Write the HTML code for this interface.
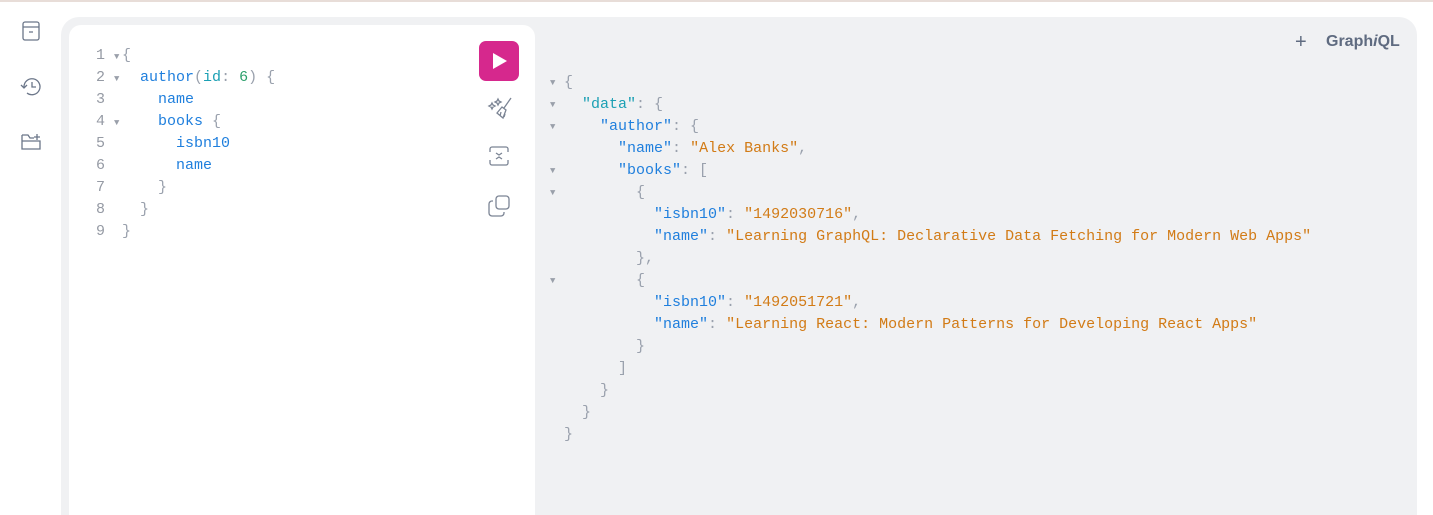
<!DOCTYPE html>
<html><head><meta charset="utf-8"><style>
*{margin:0;padding:0;box-sizing:border-box}
html,body{width:1433px;height:515px;overflow:hidden}
body{background:#fff;position:relative;font-family:"Liberation Mono",monospace;font-size:15px}
.topline{position:absolute;left:0;top:0;width:1433px;height:2px;background:#e8ddd8}
.main{position:absolute;left:61px;top:17px;width:1356px;height:498px;background:#f0f1f3;border-radius:18px 18px 0 0}
.ed{position:absolute;left:69px;top:25px;width:466px;height:490px;background:#fff;border-radius:12px 12px 0 0}
.ln{position:absolute;height:22px;line-height:22px;white-space:pre}
.g{color:#9aa1ad}.b{color:#1f7fdd}.t{color:#1ba0b4}.n{color:#2b9f6b}.o{color:#d27b16}
.num{color:#959aa4}
.arr{color:#9aa0aa;font-size:9px}
svg{position:absolute}
.run{position:absolute;left:479px;top:41px;width:40px;height:40px;background:#d6288d;border-radius:7px}
.gi{position:absolute;left:1326px;top:33px;font-family:"Liberation Sans",sans-serif;font-weight:bold;font-size:16px;color:#5f6b80}
</style></head><body>
<div class="topline"></div>
<svg style="left:22px;top:21px" width="18" height="20" viewBox="0 0 18 20" fill="none" stroke="#6b7689" stroke-width="1.3"><rect x="1" y="1" width="16" height="18" rx="2"/><path d="M1 6H17M7 11H11"/></svg>
<svg style="left:20px;top:77px" width="22" height="20" viewBox="0 0 22 20" fill="none" stroke="#6b7689" stroke-width="1.3"><path d="M4 10A8 8 0 1 1 7 16"/><path d="M1 8L4 11L7 8"/><path d="M12 5V10H16"/></svg>
<svg style="left:21px;top:133px" width="20" height="18" viewBox="0 0 20 18" fill="none" stroke="#6b7689" stroke-width="1.3"><path d="M1 2H7L9 5H13M1 2V16H19V8H1M16 1V7M13 4H19"/></svg>
<div class="main"></div>
<div class="ed"></div>
<div class="run"><svg style="left:12px;top:11px" width="18" height="18" viewBox="0 0 18 18"><path d="M2 1L16 9L2 17Z" fill="#fff"/></svg></div>
<svg style="left:487px;top:96px" width="26" height="26" viewBox="0 0 26 26" fill="none" stroke="#7b8494" stroke-width="1.3"><path d="M5 7L6 9L8 10L6 11L5 13L4 11L2 10L4 9Z M11 3L12 5L14 6L12 7L11 9L10 7L8 6L10 5Z"/><path d="M24 2L17 12M15 11L19 14L16 22L10 17Z M13 20L14 16M17 21L18 18"/></svg>
<svg style="left:489px;top:146px" width="20" height="20" viewBox="0 0 20 20" fill="none" stroke="#7b8494" stroke-width="1.3"><path d="M1 6V3A2 2 0 0 1 3 1H17A2 2 0 0 1 19 3V6M1 14V17A2 2 0 0 0 3 19H17A2 2 0 0 0 19 17V14M7 7L10 9L13 7M7 13L10 11L13 13"/></svg>
<svg style="left:488px;top:195px" width="22" height="22" viewBox="0 0 22 22" fill="none" stroke="#7b8494" stroke-width="1.3"><rect x="8" y="1" width="13" height="13" rx="3"/><path d="M5 6H4A3 3 0 0 0 1 9V18A3 3 0 0 0 4 21H13A3 3 0 0 0 16 18V17"/></svg>
<div class="gi"><span style="position:absolute;left:-31px;top:-2px;font-weight:normal;font-size:20px">+</span>Graph<i>i</i>QL</div>
<div class="ln" style="left:96px;top:45px"><span class="num">1</span> <span class="arr">▼</span></div>
<div class="ln" style="left:96px;top:67px"><span class="num">2</span> <span class="arr">▼</span></div>
<div class="ln num" style="left:96px;top:89px">3</div>
<div class="ln" style="left:96px;top:111px"><span class="num">4</span> <span class="arr">▼</span></div>
<div class="ln num" style="left:96px;top:133px">5</div>
<div class="ln num" style="left:96px;top:155px">6</div>
<div class="ln num" style="left:96px;top:177px">7</div>
<div class="ln num" style="left:96px;top:199px">8</div>
<div class="ln num" style="left:96px;top:221px">9</div>
<div class="ln" style="left:122px;top:45px"><span class="g">{</span></div>
<div class="ln" style="left:122px;top:67px">  <span class="b">author</span><span class="g">(</span><span class="t">id</span><span class="g">:</span> <span class="n">6</span><span class="g">) {</span></div>
<div class="ln" style="left:122px;top:89px">    <span class="b">name</span></div>
<div class="ln" style="left:122px;top:111px">    <span class="b">books</span> <span class="g">{</span></div>
<div class="ln" style="left:122px;top:133px">      <span class="b">isbn10</span></div>
<div class="ln" style="left:122px;top:155px">      <span class="b">name</span></div>
<div class="ln" style="left:122px;top:177px">    <span class="g">}</span></div>
<div class="ln" style="left:122px;top:199px">  <span class="g">}</span></div>
<div class="ln" style="left:122px;top:221px"><span class="g">}</span></div>
<div class="ln arr" style="left:550px;top:72px">▼</div>
<div class="ln arr" style="left:550px;top:94px">▼</div>
<div class="ln arr" style="left:550px;top:116px">▼</div>
<div class="ln arr" style="left:550px;top:160px">▼</div>
<div class="ln arr" style="left:550px;top:182px">▼</div>
<div class="ln arr" style="left:550px;top:270px">▼</div>
<div class="ln" style="left:564px;top:72px"><span class="g">{</span></div>
<div class="ln" style="left:564px;top:94px">  <span class="t">"data"</span><span class="g">: {</span></div>
<div class="ln" style="left:564px;top:116px">    <span class="b">"author"</span><span class="g">: {</span></div>
<div class="ln" style="left:564px;top:138px">      <span class="b">"name"</span><span class="g">:</span> <span class="o">"Alex Banks"</span><span class="g">,</span></div>
<div class="ln" style="left:564px;top:160px">      <span class="b">"books"</span><span class="g">: [</span></div>
<div class="ln" style="left:564px;top:182px">        <span class="g">{</span></div>
<div class="ln" style="left:564px;top:204px">          <span class="b">"isbn10"</span><span class="g">:</span> <span class="o">"1492030716"</span><span class="g">,</span></div>
<div class="ln" style="left:564px;top:226px">          <span class="b">"name"</span><span class="g">:</span> <span class="o">"Learning GraphQL: Declarative Data Fetching for Modern Web Apps"</span></div>
<div class="ln" style="left:564px;top:248px">        <span class="g">},</span></div>
<div class="ln" style="left:564px;top:270px">        <span class="g">{</span></div>
<div class="ln" style="left:564px;top:292px">          <span class="b">"isbn10"</span><span class="g">:</span> <span class="o">"1492051721"</span><span class="g">,</span></div>
<div class="ln" style="left:564px;top:314px">          <span class="b">"name"</span><span class="g">:</span> <span class="o">"Learning React: Modern Patterns for Developing React Apps"</span></div>
<div class="ln" style="left:564px;top:336px">        <span class="g">}</span></div>
<div class="ln" style="left:564px;top:358px">      <span class="g">]</span></div>
<div class="ln" style="left:564px;top:380px">    <span class="g">}</span></div>
<div class="ln" style="left:564px;top:402px">  <span class="g">}</span></div>
<div class="ln" style="left:564px;top:424px"><span class="g">}</span></div>
</body></html>
